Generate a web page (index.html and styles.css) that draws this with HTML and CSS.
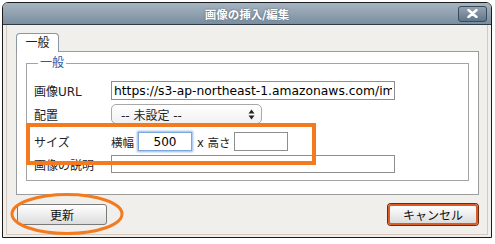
FILE: index.html
```html
<!DOCTYPE html>
<html lang="ja">
<head>
  <meta charset="UTF-8" />
  <title>画像の挿入/編集</title>
  <link rel="stylesheet" href="styles.css">
</head>
<body>

  <div class="dialog">

    <!-- TITLE BAR -->
    <div class="titlebar">
      <span></span>
      <h1 class="title">画像の挿入/編集</h1>
      <button class="close" aria-label="閉じる">
        <svg width="11" height="9" viewBox="0 0 11 9"><path d="M1.5 1 L9.5 8 M9.5 1 L1.5 8" stroke="#fff" stroke-width="2.4" stroke-linecap="round"/></svg>
      </button>
    </div>

    <!-- CONTENT -->
    <div class="content">
      <div class="frame">
        <div class="tabs"><span class="tab">一般</span></div>

        <div class="panel">
          <fieldset>
            <legend>一般</legend>

            <div class="row row-url">
              <label class="label">画像URL</label>
              <input type="text" class="field wide url" value="https://s3-ap-northeast-1.amazonaws.com/images/sample-image.png" />
            </div>

            <div class="row row-align">
              <label class="label">配置</label>
              <div class="select">
                <span>-- 未設定 --</span>
                <svg width="7" height="11" viewBox="0 0 7 11"><path d="M3.5 0.5 L6.5 4.5 L0.5 4.5 Z M3.5 10.5 L6.5 6.5 L0.5 6.5 Z" fill="#222"/></svg>
              </div>
            </div>

            <div class="row row-size">
              <label class="label">サイズ</label>
              <span class="sub">横幅</span>
              <input type="text" class="field small focus" value="500" />
              <span class="sub times">x 高さ</span>
              <input type="text" class="field small" value="" />
            </div>

            <div class="row row-desc">
              <label class="label">画像の説明</label>
              <input type="text" class="field wide" value="" />
            </div>
          </fieldset>
        </div>

        <!-- BUTTONS -->
        <div class="actions">
          <button class="btn">更新</button>
          <button class="btn cancel">キャンセル</button>
        </div>
      </div>
    </div>

    <!-- ANNOTATIONS -->
    <div class="mark-rect"></div>
    <svg class="mark-ellipse" width="114" height="42" viewBox="0 0 114 42">
      <ellipse cx="57" cy="21" rx="55" ry="19.5" fill="none" stroke="#f47a1f" stroke-width="3"/>
    </svg>
  </div>

</body>
</html>
```

FILE: styles.css
```css
body {
  margin: 0;
  background-color: #fff;
  font-family: "DejaVu Sans", "Noto Sans CJK JP", sans-serif;
  font-size: 12px;
  color: #222;
}

.dialog {
  position: relative;
  width: 488px;
  margin: 2px 0 0 2px;
  border: 1px solid #1c1c1c;
  border-radius: 6px 6px 0 0;
  background-color: #f0efeb;
}

/* title bar */
.titlebar {
  display: grid;
  grid-template-columns: 1fr auto 1fr;
  align-items: center;
  height: 21px;
  border-bottom: 1px solid #2e3a44;
  border-radius: 5px 5px 0 0;
  background: linear-gradient(#a6b4c1, #7a8e9f);
}

.title {
  margin: 0;
  font-size: 11.5px;
  font-weight: bold;
  color: #fff;
  text-shadow: 0 0 2px #4a5a68;
}

.close {
  justify-self: end;
  display: flex;
  align-items: center;
  justify-content: center;
  width: 29px;
  height: 16px;
  margin-right: 4px;
  padding: 0;
  border: 1px solid #3c4a57;
  border-radius: 3px;
  background: linear-gradient(#93a3b2, #62768a);
}

/* content */
.content {
  padding: 0 3px 2px;
}

.frame {
  padding: 8px 8px 9px 9px;
  border: 1px solid #d8c9bf;
  border-top: none;
}

.tabs {
  display: flex;
}

.tab {
  position: relative;
  z-index: 1;
  box-sizing: border-box;
  width: 43px;
  height: 19px;
  margin-bottom: -1px;
  padding-top: 1px;
  border: 1px solid #8996a4;
  border-bottom: none;
  border-radius: 4px 4px 0 0;
  background-color: #fff;
  text-align: center;
  line-height: 16px;
}

.panel {
  padding: 4px 9px 13px;
  border: 1px solid #9c9c9c;
  background-color: #fff;
}

fieldset {
  margin: 0;
  padding: 11px 7px 7px;
  border: 1px solid #a4a4a4;
}

legend {
  margin-left: 4px;
  padding: 0 2px;
  line-height: 14px;
  color: #2d59aa;
}

.row {
  display: flex;
  align-items: center;
}

.row-url { height: 19px; margin-bottom: 4px; }
.row-align { height: 20px; margin-bottom: 8px; }
.row-size { height: 19px; margin-bottom: 4px; }
.row-desc { height: 18px; }

.label {
  width: 77px;
  flex: none;
}

.field {
  box-sizing: border-box;
  height: 100%;
  padding: 0 2px;
  border: 1px solid #8e8e8e;
  border-radius: 0;
  background-color: #fff;
  font-family: "DejaVu Sans", "Noto Sans CJK JP", sans-serif;
  font-size: 12px;
  color: #000;
  outline: none;
}

.field.wide {
  width: 284px;
}

.field.url {
  font-size: 12.3px;
}

.field.small {
  width: 54px;
  text-align: center;
}

.field.focus {
  border-color: #7fa6d8;
  box-shadow: 0 0 2px 1px #8cb6ec;
}

.sub {
  margin-right: 4px;
  font-size: 11.5px;
}

.times {
  margin-left: 5px;
}

.select {
  box-sizing: border-box;
  display: flex;
  align-items: center;
  justify-content: space-between;
  width: 151px;
  height: 100%;
  padding: 0 6px 0 9px;
  border: 1px solid #a8a8a8;
  border-radius: 5px;
  background: linear-gradient(#ffffff, #f1f1f1);
}

/* buttons */
.actions {
  display: flex;
  justify-content: space-between;
  margin-top: 9px;
  padding: 0 1px;
}

.btn {
  width: 90px;
  height: 21px;
  padding: 0;
  border: 1px solid #7a7a7a;
  border-radius: 3px;
  background: linear-gradient(#ffffff, #dcdcdc);
  font-family: "DejaVu Sans", "Noto Sans CJK JP", sans-serif;
  font-size: 12px;
  color: #111;
}

.btn.cancel {
  border: 2px solid #dd5a22;
  box-shadow: 0 0 0 1px #6a2c14;
}

/* orange annotations */
.mark-rect {
  position: absolute;
  left: 23px;
  top: 120px;
  width: 282px;
  height: 34px;
  border: 4px solid #f47a1f;
}

.mark-ellipse {
  position: absolute;
  left: 7px;
  top: 190px;
}
```
